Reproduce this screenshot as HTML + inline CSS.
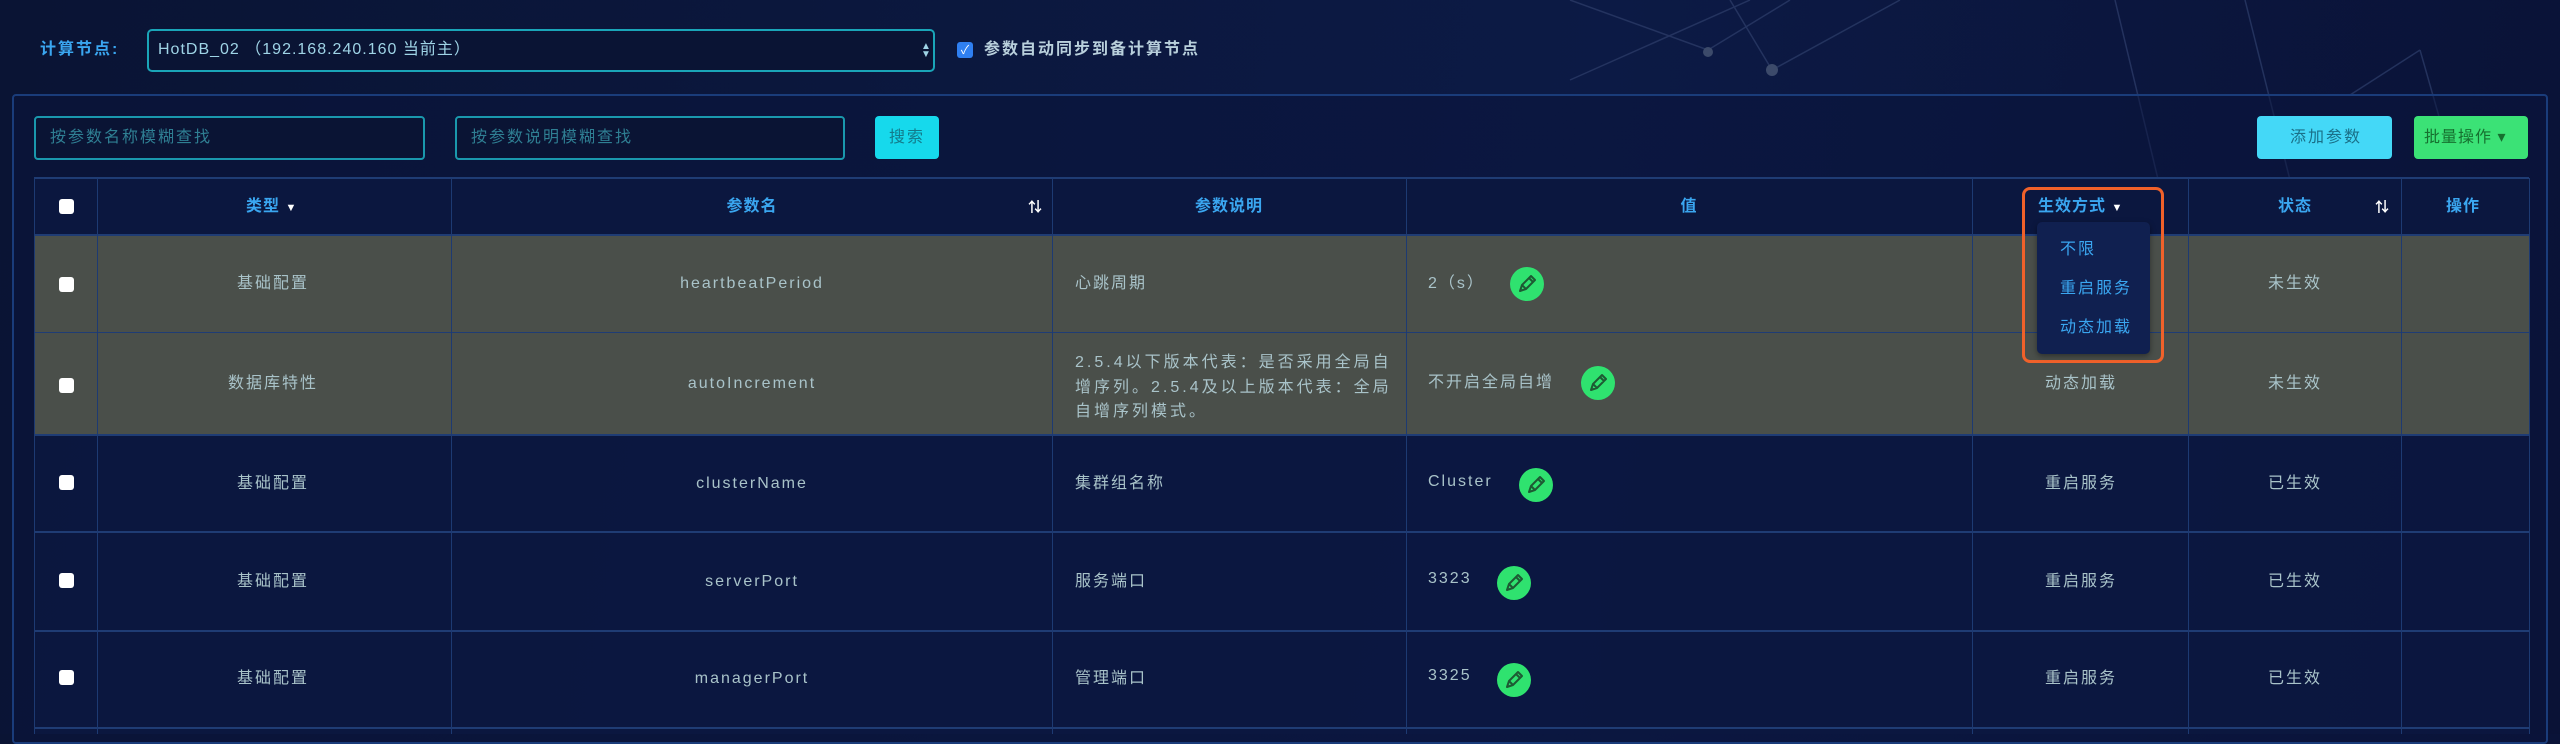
<!DOCTYPE html>
<html><head><meta charset="utf-8"><style>
*{margin:0;padding:0;box-sizing:border-box}
body{width:2560px;height:734px;overflow:hidden;background:linear-gradient(100deg,#0a1434 0%,#0c1a45 60%,#0a1236 100%);font-family:"Liberation Sans","Noto Sans CJK SC",sans-serif;position:relative;color:#a9c3c9}
.a{position:absolute;line-height:20px}
.t{font-size:16px;letter-spacing:2px;white-space:nowrap}
.h{color:#3aa6f0;font-size:16px;font-weight:bold;letter-spacing:1px}
.vl{position:absolute;width:1px;background:#1d3a72;top:178px;height:556px}
.hl{position:absolute;height:2px;background:#1f3c74;left:34px;width:2495px}
.cb{position:absolute;width:15px;height:15px;background:#fff;border-radius:3px}
.pen{position:absolute;width:34px;height:34px;border-radius:50%;background:#2fe26f}
.c{text-align:center;transform:translateX(-50%)}
</style></head><body>
<svg class="a" style="left:0;top:0" width="2560" height="734">
<g stroke="#2a3a66" stroke-width="1.5" fill="none" opacity=".8">
<line x1="1570" y1="0" x2="1708" y2="50"/><line x1="1708" y1="50" x2="1790" y2="0"/>
<line x1="1730" y1="0" x2="1772" y2="70"/><line x1="1772" y1="70" x2="1900" y2="0"/>
<line x1="1570" y1="80" x2="1750" y2="0"/>
<line x1="2115" y1="0" x2="2175" y2="250"/><line x1="2245" y1="0" x2="2300" y2="220"/>
<line x1="2350" y1="95" x2="2420" y2="50"/><line x1="2420" y1="50" x2="2440" y2="120"/>
</g>
<circle cx="1708" cy="52" r="5" fill="#3c4a6a"/><circle cx="1772" cy="70" r="6" fill="#3c4a6a"/>
</svg>
<div class="a t" style="left:40px;top:40px;color:#3aa6f0;font-weight:bold">计算节点:</div>
<div class="a" style="left:147px;top:29px;width:788px;height:43px;border:2px solid #1aa5b8;border-radius:5px;background:#0a1434"></div>
<div class="a t" style="left:158px;top:40px;color:#9fd4e6;letter-spacing:1px">HotDB_02 （192.168.240.160 当前主）</div>
<div class="a" style="left:921px;top:43px;color:#9fd4e6;font-size:10px;line-height:8px">▲<br>▼</div>
<div class="a" style="left:957px;top:42px;width:16px;height:16px;background:#2f7ff0;border-radius:3px;color:#fff;font-size:12px;text-align:center;line-height:16px">✓</div>
<div class="a t" style="left:984px;top:40px;color:#b9d0dc;font-weight:bold">参数自动同步到备计算节点</div>
<div class="a" style="left:12px;top:94px;width:2536px;height:650px;border:2px solid #1a3c7a;border-radius:4px;background:rgba(10,20,60,.5)"></div>
<div class="a" style="left:34px;top:116px;width:391px;height:44px;border:2px solid #1a98ad;border-radius:4px;background:#0a1434"></div>
<div class="a t" style="left:50px;top:128px;color:#2f7f93">按参数名称模糊查找</div>
<div class="a" style="left:455px;top:116px;width:390px;height:44px;border:2px solid #1a98ad;border-radius:4px;background:#0a1434"></div>
<div class="a t" style="left:471px;top:128px;color:#2f7f93">按参数说明模糊查找</div>
<div class="a" style="left:875px;top:116px;width:64px;height:43px;background:#16d9ec;border-radius:4px"></div>
<div class="a t" style="left:889px;top:128px;color:#137a8a">搜索</div>
<div class="a" style="left:2257px;top:116px;width:135px;height:43px;background:#44d8f7;border-radius:4px"></div>
<div class="a t" style="left:2290px;top:128px;color:#1a7088">添加参数</div>
<div class="a" style="left:2414px;top:116px;width:114px;height:43px;background:#3be276;border-radius:4px"></div>
<div class="a t" style="left:2424px;top:128px;color:#16702f;letter-spacing:1px">批量操作 ▾</div>
<!-- table -->
<div class="a" style="left:34px;top:178px;width:2495px;height:57px;background:#0b173f"></div>
<div class="a" style="left:34px;top:235px;width:2495px;height:200px;background:#4a4f4a"></div>
<div class="a" style="left:34px;top:435px;width:2495px;height:299px;background:rgba(12,24,66,.7)"></div>
<div class="hl" style="top:177px"></div><div class="hl" style="top:234px"></div><div class="hl" style="top:332px;height:1px"></div><div class="hl" style="top:434px"></div><div class="hl" style="top:531px"></div><div class="hl" style="top:630px"></div><div class="hl" style="top:727px"></div>
<div class="vl" style="left:34px"></div><div class="vl" style="left:97px"></div><div class="vl" style="left:451px"></div><div class="vl" style="left:1052px"></div><div class="vl" style="left:1406px"></div><div class="vl" style="left:1972px"></div><div class="vl" style="left:2188px"></div><div class="vl" style="left:2401px"></div><div class="vl" style="left:2529px"></div>
<div class="cb" style="left:59px;top:199px"></div>
<div class="a h" style="left:246px;top:197px">类型 <span style="color:#fff;font-size:11px">▼</span></div>
<div class="a h c" style="left:752px;top:197px">参数名</div>
<div class="a" style="left:1028px;top:197px;color:#fff;font-size:14px;font-weight:bold">⇅</div>
<div class="a h c" style="left:1229px;top:197px">参数说明</div>
<div class="a h c" style="left:1689px;top:197px">值</div>
<div class="a h c" style="left:2295px;top:197px">状态</div>
<div class="a" style="left:2375px;top:197px;color:#fff;font-size:14px;font-weight:bold">⇅</div>
<div class="a h c" style="left:2463px;top:197px">操作</div>
<!-- rows -->
<div class="cb" style="left:59px;top:277px"></div>
<div class="a t c" style="left:273px;top:274px">基础配置</div>
<div class="a t c" style="left:752px;top:274px">heartbeatPeriod</div>
<div class="a t" style="left:1075px;top:274px">心跳周期</div>
<div class="a t" style="left:1428px;top:274px">2（s）</div>
<div class="pen" style="left:1510px;top:267px"></div>
<div class="a t c" style="left:2295px;top:274px">未生效</div>
<div class="cb" style="left:59px;top:378px"></div>
<div class="a t c" style="left:273px;top:374px">数据库特性</div>
<div class="a t c" style="left:752px;top:374px">autoIncrement</div>
<div class="a" style="left:1075px;top:351px;width:328px;font-size:16px;letter-spacing:3px;line-height:24.5px">2.5.4以下版本代表：是否采用全局自增序列。2.5.4及以上版本代表：全局自增序列模式。</div>
<div class="a t" style="left:1428px;top:373px">不开启全局自增</div>
<div class="pen" style="left:1581px;top:366px"></div>
<div class="a t c" style="left:2081px;top:374px">动态加载</div>
<div class="a t c" style="left:2295px;top:374px">未生效</div>
<div class="cb" style="left:59px;top:475px"></div>
<div class="a t c" style="left:273px;top:474px">基础配置</div>
<div class="a t c" style="left:752px;top:474px">clusterName</div>
<div class="a t" style="left:1075px;top:474px">集群组名称</div>
<div class="a t" style="left:1428px;top:472px">Cluster</div>
<div class="pen" style="left:1519px;top:468px"></div>
<div class="a t c" style="left:2081px;top:474px">重启服务</div>
<div class="a t c" style="left:2295px;top:474px">已生效</div>
<div class="cb" style="left:59px;top:573px"></div>
<div class="a t c" style="left:273px;top:572px">基础配置</div>
<div class="a t c" style="left:752px;top:572px">serverPort</div>
<div class="a t" style="left:1075px;top:572px">服务端口</div>
<div class="a t" style="left:1428px;top:569px">3323</div>
<div class="pen" style="left:1497px;top:566px"></div>
<div class="a t c" style="left:2081px;top:572px">重启服务</div>
<div class="a t c" style="left:2295px;top:572px">已生效</div>
<div class="cb" style="left:59px;top:670px"></div>
<div class="a t c" style="left:273px;top:669px">基础配置</div>
<div class="a t c" style="left:752px;top:669px">managerPort</div>
<div class="a t" style="left:1075px;top:669px">管理端口</div>
<div class="a t" style="left:1428px;top:666px">3325</div>
<div class="pen" style="left:1497px;top:663px"></div>
<div class="a t c" style="left:2081px;top:669px">重启服务</div>
<div class="a t c" style="left:2295px;top:669px">已生效</div>
<!-- pencils -->
<svg class="a" style="left:0;top:0" width="2560" height="734">
<defs><g id="p"><path d="M-7 7 L-5 1 L4 -8 L8 -4 L-1 5 Z M-5 1 L-1 5 M2 -6 L6 -2" fill="none" stroke="#1d5a33" stroke-width="2" stroke-linejoin="round"/></g></defs>
<use href="#p" x="1527" y="284"/><use href="#p" x="1598" y="383"/><use href="#p" x="1536" y="485"/><use href="#p" x="1514" y="583"/><use href="#p" x="1514" y="680"/>
</svg>
<!-- dropdown -->
<div class="a" style="left:2022px;top:187px;width:142px;height:176px;border:3px solid #f0612a;border-radius:8px"></div>
<div class="a h" style="left:2038px;top:197px">生效方式 <span style="color:#fff;font-size:11px">▼</span></div>
<div class="a" style="left:2037px;top:222px;width:113px;height:132px;background:#102050;border-radius:5px;box-shadow:0 2px 6px rgba(0,0,0,.4)"></div>
<div class="a t" style="left:2060px;top:240px;color:#3aa6f0">不限</div>
<div class="a t" style="left:2060px;top:279px;color:#3aa6f0">重启服务</div>
<div class="a t" style="left:2060px;top:318px;color:#3aa6f0">动态加载</div>
</body></html>
